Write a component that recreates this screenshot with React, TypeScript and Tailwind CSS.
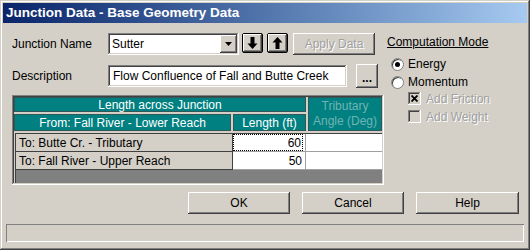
import React from "react";

const raised =
  "shadow-[inset_-1px_-1px_#404040,inset_1px_1px_#ffffff,inset_-2px_-2px_#808080,inset_2px_2px_#d4d0c8]";
const sunken =
  "shadow-[inset_-1px_-1px_#ffffff,inset_1px_1px_#808080,inset_-2px_-2px_#d4d0c8,inset_2px_2px_#404040]";

function ArrowIcon({ up }: { up?: boolean }) {
  return (
    <svg width="11" height="14" viewBox="0 0 11 14">
      <g transform={up ? "rotate(180 5.5 7)" : undefined}>
        <rect x="3.5" y="1" width="4" height="7" fill="#000" />
        <polygon points="0.5,7.5 10.5,7.5 5.5,13" fill="#000" />
      </g>
    </svg>
  );
}

export default function App() {
  return (
    <div
      className="w-[530px] h-[250px] bg-[#d4d0c8] text-[12px] text-black overflow-hidden shadow-[inset_-1px_-1px_#404040,inset_1px_1px_#d4d0c8,inset_-2px_-2px_#808080,inset_2px_2px_#ffffff] p-[3px] flex flex-col"
      style={{ fontFamily: '"Liberation Sans", Arial, sans-serif' }}
    >
      {/* Title bar */}
      <div className="h-[20px] bg-gradient-to-r from-[#0a246a] to-[#a6caf0] flex items-center pl-[3px]">
        <span className="text-white font-bold text-[13.5px] leading-none">
          Junction Data - Base Geometry Data
        </span>
      </div>

      <div className="flex flex-1">
        {/* left column */}
        <div className="flex flex-col pl-[9px] pt-[10px] w-[384px]">
          {/* Row 1 */}
          <div className="flex items-start h-[23px]">
            <div className="w-[96px] h-[22px] flex items-center">Junction Name</div>
            <div className={`w-[131px] h-[22px] bg-white ${sunken} flex items-center pl-[4px] pr-[2px]`}>
              <span className="flex-1">Sutter</span>
              <div className={`w-[17px] h-[18px] bg-[#d4d0c8] ${raised} flex items-center justify-center`}>
                <svg width="7" height="4" viewBox="0 0 7 4">
                  <polygon points="0,0 7,0 3.5,4" fill="#000" />
                </svg>
              </div>
            </div>
            <div className="ml-[3px] w-[21px] h-[20px] border border-black rounded-[2px] bg-[#d4d0c8] flex items-center justify-center">
              <div className={`w-[19px] h-[18px] ${raised} flex items-center justify-center`}>
                <ArrowIcon />
              </div>
            </div>
            <div className="ml-[4px] w-[21px] h-[20px] border border-black rounded-[2px] bg-[#d4d0c8] flex items-center justify-center">
              <div className={`w-[19px] h-[18px] ${raised} flex items-center justify-center`}>
                <ArrowIcon up />
              </div>
            </div>
            <div className={`ml-[5px] w-[82px] h-[22px] ${raised} flex items-center justify-center text-[#a0a0a0] [text-shadow:1px_1px_#ffffff]`}>
              Apply Data
            </div>
          </div>

          {/* Row 2 */}
          <div className="flex items-center mt-[8px] h-[24px]">
            <div className="w-[96px]">Description</div>
            <div className={`w-[239px] h-[22px] bg-white ${sunken} flex items-center pl-[5px]`}>
              Flow Confluence of Fall and Butte Creek
            </div>
            <div className={`ml-[9px] w-[22px] h-[24px] ${raised} flex items-end justify-center pb-[4px] font-bold leading-none`}>
              ...
            </div>
          </div>

          {/* Table */}
          <div className={`mt-[7px] w-[372px] h-[90px] ${sunken} p-[2px] flex flex-col`}>
            <div className="grid grid-cols-[217px_73px_74px] gap-x-[2px] grid-rows-[15px_17px] gap-y-[2px] text-white">
              <div className="col-span-2 bg-[#008080] border border-[#305858] flex items-center justify-center leading-none">
                Length across Junction
              </div>
              <div className="row-span-2 bg-[#008080] border border-[#305858] flex flex-col items-center justify-center leading-[15px] text-[#70b4b4]">
                <span>Tributary</span>
                <span>Angle (Deg)</span>
              </div>
              <div className="bg-[#008080] border border-[#305858] flex items-center justify-center leading-none">
                From: Fall River - Lower Reach
              </div>
              <div className="bg-[#008080] border border-[#305858] flex items-center justify-center leading-none">
                Length (ft)
              </div>
            </div>
            <div className="mt-[2px] ml-[1px] flex-1 bg-[#808080] border-l border-t border-[#404040] flex flex-col">
              {[
                ["To: Butte Cr. - Tributary", "60"],
                ["To: Fall River - Upper Reach", "50"],
              ].map(([label, val], i) => (
                <div key={i} className="flex h-[18px]">
                  <div className="w-[217px] bg-[#d4d0c8] border-r border-b border-[#404040] flex items-center pl-[3px] leading-none">
                    {label}
                  </div>
                  <div className="w-[73px] bg-white border-r border-b border-[#a0a0a0] flex items-center justify-end pr-[2px] leading-none">
                    <div
                      className={`h-full w-full flex items-center justify-end pr-[1px] ${
                        i === 0 ? "border border-dotted border-black" : ""
                      }`}
                    >
                      {val}
                    </div>
                  </div>
                  <div className="flex-1 bg-white border-b border-[#a0a0a0]" />
                </div>
              ))}
            </div>
          </div>
        </div>

        {/* right column */}
        <div className="flex flex-col pt-[13px] pl-[0px]">
          <div className="underline leading-none h-[14px]">Computation Mode</div>
          <div className="flex items-center mt-[6px] h-[16px]">
            <div className="w-[13px] h-[13px] rounded-full bg-white border border-[#808080] ml-[4px] flex items-center justify-center shadow-[inset_1px_1px_#404040]">
              <div className="w-[5px] h-[5px] rounded-full bg-black" />
            </div>
            <span className="ml-[4px]">Energy</span>
          </div>
          <div className="flex items-center mt-[2px] h-[16px]">
            <div className="w-[13px] h-[13px] rounded-full bg-white border border-[#808080] ml-[4px] shadow-[inset_1px_1px_#404040]" />
            <span className="ml-[4px]">Momentum</span>
          </div>
          <div className="flex items-center mt-[0px] h-[17px] pl-[21px]">
            <div className={`w-[13px] h-[13px] bg-[#d4d0c8] ${sunken} flex items-center justify-center`}>
              <svg width="7" height="7" viewBox="0 0 7 7">
                <path d="M0.5 0.5 L6.5 6.5 M6.5 0.5 L0.5 6.5" stroke="#000" strokeWidth="1.8" />
              </svg>
            </div>
            <span className="ml-[5px] text-[#a0a0a0] [text-shadow:1px_1px_#ffffff]">Add Friction</span>
          </div>
          <div className="flex items-center mt-[1px] h-[17px] pl-[21px]">
            <div className={`w-[13px] h-[13px] bg-[#d4d0c8] ${sunken}`} />
            <span className="ml-[5px] text-[#a0a0a0] [text-shadow:1px_1px_#ffffff]">Add Weight</span>
          </div>
        </div>
      </div>

      {/* Buttons */}
      <div className="flex justify-end pr-[8px] gap-[12px] mb-[10px]">
        <div className={`w-[102px] h-[22px] ${raised} flex items-center justify-center`}>OK</div>
        <div className={`w-[102px] h-[22px] ${raised} flex items-center justify-center`}>Cancel</div>
        <div className={`w-[103px] h-[22px] ${raised} flex items-center justify-center`}>Help</div>
      </div>

      {/* Status bar */}
      <div className="mx-[3px] mb-[5px] h-[18px] shadow-[inset_1px_1px_#808080,inset_-1px_-1px_#ffffff]" />
    </div>
  );
}
